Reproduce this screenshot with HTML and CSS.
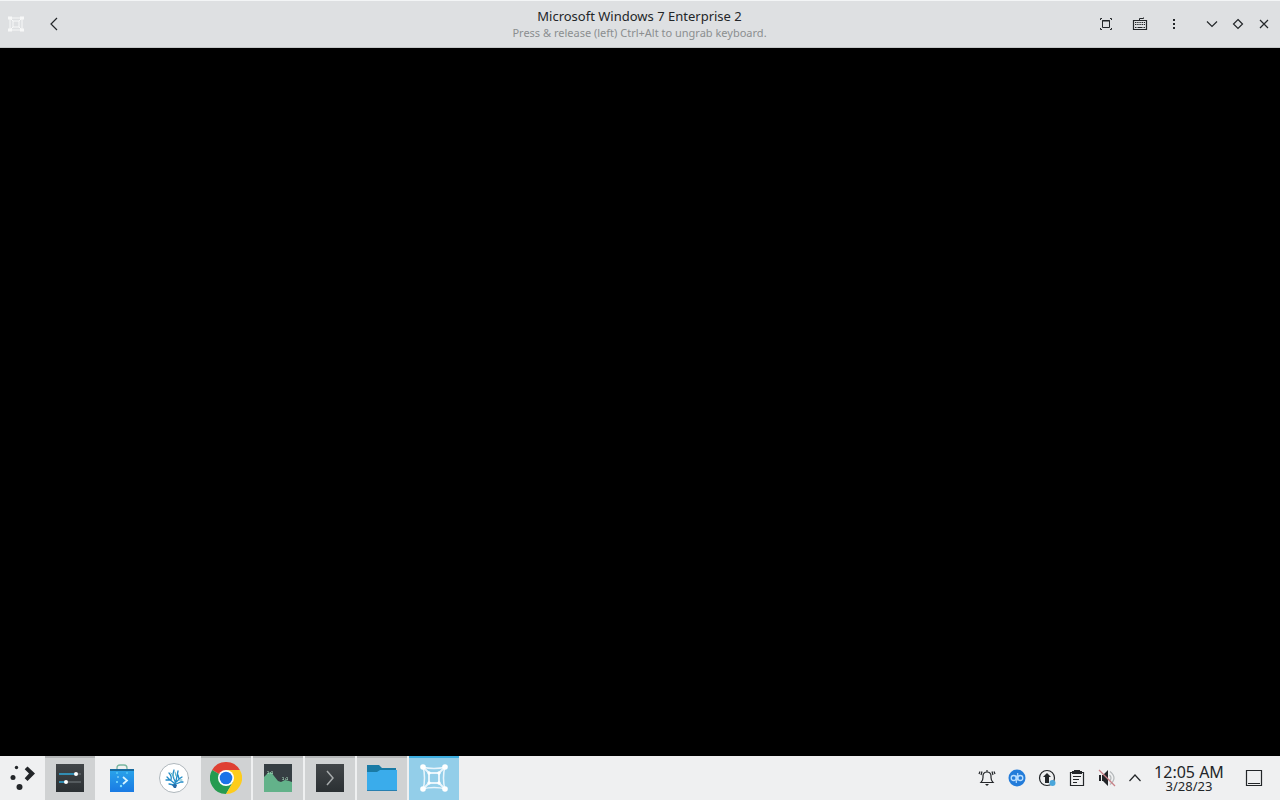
FILE: index.html
```html
<!DOCTYPE html>
<html lang="en">
<head>
  <meta charset="UTF-8" />
  <title>Microsoft Windows 7 Enterprise 2</title>
  <link rel="stylesheet" href="styles.css">
</head>
<body>
  <header class="titlebar">
    <div class="bar-left">
      <svg class="app-icon" viewBox="0 0 16 16" fill="none" stroke="#f7f8f8">
        <path d="M2 2h12v12H2zM5 5h6v6H5zM2 2l3 3M14 2l-3 3M2 14l3-3M14 14l-3-3" />
        <path d="M0 2h4M12 2h4M0 14h4M12 14h4" stroke-width="3" />
      </svg>
      <button class="bar-button" aria-label="Back">
        <svg viewBox="0 0 16 16"><path d="M11 2L5 8l6 6" /></svg>
      </button>
    </div>
    <div class="heading">
      <h1>Microsoft Windows 7 Enterprise 2</h1>
      <p>Press &amp; release (left) Ctrl+Alt to ungrab keyboard.</p>
    </div>
    <div class="bar-right">
      <button class="bar-button" aria-label="Fullscreen">
        <svg viewBox="0 0 16 16"><path d="M4.500 4.500h7v7h-7zM4 5h8M2.500 4V2.500H4M12 2.500h1.500V4M13.500 12v1.500H12M4 13.500H2.500V12" stroke-width="1" /></svg>
      </button>
      <button class="bar-button" aria-label="Send key">
        <svg viewBox="0 0 16 16"><path d="M1.500 4.500h13v9h-13z" /><path d="M7.500 4V2.500h4V1.500" stroke-width="1" /><path d="M3 6.500h10M3 8.500h10" stroke-dasharray="1.400 .8" /><path d="M3 11.500h1.500M5.500 11.500h5M11.500 11.500H13" /></svg>
      </button>
      <button class="bar-button" aria-label="Menu">
        <svg viewBox="0 0 16 16"><path d="M7 3h2v2H7zM7 7h2v2H7zM7 11h2v2H7z" fill="#232629" stroke="none" /></svg>
      </button>
      <div class="window-buttons">
        <button aria-label="Minimize"><svg viewBox="0 0 16 16"><path d="M3 5.500l5 5 5-5" /></svg></button>
        <button aria-label="Maximize"><svg viewBox="0 0 16 16"><path d="M8 3.500l4.500 4.500L8 12.500 3.500 8z" /></svg></button>
        <button aria-label="Close"><svg viewBox="0 0 16 16"><path d="M4 4l8 8M12 4l-8 8" /></svg></button>
      </div>
    </div>
  </header>

  <main class="display"></main>

  <footer class="taskbar">
    <button class="launcher" aria-label="Applications">
      <svg viewBox="0 0 28 28" fill="#232629">
        <circle cx="7.500" cy="3.500" r="1.700" /><circle cx="4" cy="13.500" r="2.500" /><circle cx="10.500" cy="23" r="3" />
        <path d="M18.500 2.500l7.500 7-7.500 7.500-2.800-2.800 4.300-4.700-4.300-4.300z" />
      </svg>
    </button>
    <nav class="tasks">
      <button class="task open" aria-label="System Settings">
        <svg viewBox="0 0 32 32">
          <path d="M2 2h28v28H2z" fill="url(#dark)" />
          <path d="M5 12h17M5 20h7" stroke="#31a8d8" stroke-width="1.600" /><path d="M12 20h15M22 12h5" stroke="#60676b" stroke-width="1.600" />
          <circle cx="22" cy="12" r="2" fill="#fff" /><circle cx="12" cy="20" r="2" fill="#fff" />
          <defs><linearGradient id="dark" x2="0" y2="1"><stop stop-color="#424649" /><stop offset="1" stop-color="#2b3033" /></linearGradient></defs>
        </svg>
      </button>
      <button class="task" aria-label="Discover">
        <svg viewBox="0 0 32 32">
          <path d="M11 7V6q0-3 3-3h4q3 0 3 3v1" fill="none" stroke="#7ab6a0" stroke-width="1.300" />
          <path d="M4 7h24v23H4z" fill="url(#bag)" /><path d="M4 7h24v2H4z" fill="#17699d" />
          <path d="M17 15l4 3.500-4 3.500" fill="none" stroke="#d6f4ff" stroke-width="1.800" />
          <circle cx="12" cy="15" r=".8" fill="#b9f2ff" /><circle cx="11" cy="20" r="1" fill="#7ddfff" /><circle cx="15" cy="24" r="1.200" fill="#7ddfff" /><circle cx="11" cy="11" r=".8" fill="#6ce5ff" /><circle cx="21" cy="11" r=".8" fill="#6ce5ff" />
          <defs><linearGradient id="bag" x2="0" y2="1"><stop stop-color="#2ba5ea" /><stop offset="1" stop-color="#197ae4" /></linearGradient></defs>
        </svg>
      </button>
      <button class="task" aria-label="Coral">
        <svg viewBox="0 0 32 32" fill="none" stroke-linecap="round">
          <circle cx="16" cy="16" r="14.500" fill="#fff" stroke="#8f9ba2" stroke-width=".7" />
          <path d="M17 25q1-5-1-8t0-9M17 22q-3-3-5-4l-3-3M12 18l-4 0M13 18q1-4-2-7M17 21q3-2 4-4l3-2M21 17l-1-4M18 19q1-5 2-10M16 23l-5-1M18 22l5-2 2 0" stroke="#218bc7" stroke-width="1.300" />
          <path d="M16 15l-3-4M18 14l-1-4M21 18l3 0" stroke="#52b1c2" />
          <path d="M14 23l3-1 2 1-1 3h-2z" fill="#276ba8" />
        </svg>
      </button>
      <button class="task open" aria-label="Google Chrome">
        <svg viewBox="0 0 32 32">
          <path d="M16 16L2.140 8A16 16 0 0 1 29.860 8z" fill="#df4032" />
          <path d="M16 16L2.140 8A16 16 0 0 0 16 32l7-12z" fill="#259b50" />
          <path d="M16 8h13.860A16 16 0 0 1 16 32l7-12z" fill="#fdcc1c" />
          <circle cx="16" cy="16" r="8" fill="#fff" /><circle cx="16" cy="16" r="6.300" fill="#1b73e8" />
        </svg>
      </button>
      <button class="task open" aria-label="System Monitor">
        <svg viewBox="0 0 32 32">
          <path d="M2 2h28v28H2z" fill="#363e43" />
          <path d="M2 15l4-4 3-1 3 4 4 5 3 1 4-2 4 1 3 1v10H2z" fill="#63b28a" />
          <path d="M6 9v4M10 9v4M6 11h5M21 15v4M25 15v4M21 17h5" stroke="#a8d8bd" stroke-dasharray="1 1" />
        </svg>
      </button>
      <button class="task open" aria-label="Terminal">
        <svg viewBox="0 0 32 32"><path d="M2 2h28v28H2z" fill="url(#dark)" /><path d="M13 9l6 7-6 7" fill="none" stroke="#a7abac" stroke-width="1.500" /></svg>
      </button>
      <button class="task open" aria-label="Files">
        <svg viewBox="0 0 32 32"><path d="M1 3h12l3 3h14v5H1z" fill="#197aa5" /><path d="M1 10h10l3-2h17v20H1z" fill="#3aaceb" /><path d="M1 28h30v1H1z" fill="#287fb0" /></svg>
      </button>
      <button class="task active" aria-label="Boxes">
        <svg viewBox="0 0 32 32" fill="none" stroke="#e8f5fc">
          <path d="M5 4q3 12 0 24M27 4q-3 12 0 24M4 5q12 3 24 0M4 27q12-3 24 0" stroke-width="1.500" />
          <path d="M11 11h10v10H11z" stroke-width="2" />
          <path d="M5 5l6 6M27 5l-6 6M5 27l6-6M27 27l-6-6" stroke-width="1.800" />
          <g fill="#fff" stroke="none"><circle cx="5" cy="5" r="2.800" /><circle cx="27" cy="5" r="2.800" /><circle cx="5" cy="27" r="2.800" /><circle cx="27" cy="27" r="2.800" /><circle cx="11" cy="11" r="1.700" /><circle cx="21" cy="11" r="1.700" /><circle cx="11" cy="21" r="1.700" /><circle cx="21" cy="21" r="1.700" /></g>
        </svg>
      </button>
    </nav>

    <div class="tray">
      <button aria-label="Notifications"><svg viewBox="0 0 20 20"><path d="M4 14.500h12q-2-2-2-5V8q0-4-4-4T6 8v1.500q0 3-2 5zM10 4V2M5 3.500L4 7M3 3.500L2 6M15 3.500l1 3.500M17 3.500l1 2.500" /><path d="M8 16h4l-2 2z" fill="#232629" stroke="none" /></svg></button>
      <button aria-label="qBittorrent"><svg viewBox="0 0 20 20"><circle cx="10" cy="10" r="8.500" fill="#237cda" stroke="none" /><g stroke="#b9deff" stroke-width="1.300"><circle cx="6.700" cy="10" r="2.500" /><circle cx="13.300" cy="10" r="2.500" /><path d="M9.300 7.500V15M10.700 5v7.500" stroke-width="1.200" /></g></svg></button>
      <button aria-label="Updates"><svg viewBox="0 0 20 20"><circle cx="10" cy="10" r="7.500" /><path d="M10 5l4 4h-2v6H8V9H6z" fill="#232629" stroke="none" /><circle cx="15.500" cy="15" r="3" fill="#4aa6db" stroke="none" /></svg></button>
      <button aria-label="Clipboard"><svg viewBox="0 0 20 20"><path d="M3.500 4.500h13v13h-13zM6 8.500h8M6 11.500h6M6 14.500h4" /><path d="M5 3h2V2h6v1h2v3H5z" fill="#232629" stroke="none" /></svg></button>
      <button aria-label="Muted"><svg viewBox="0 0 20 20"><path d="M2 7h2v6H2zM5 7h1l5-5v16l-5-5H5z" fill="#232629" stroke="none" /><path d="M12.500 7q3 3 0 6M13 3.500q8 6.500 0 13" stroke="#b4b7b9" /><path d="M2 2l16 16" stroke="#c98087" /></svg></button>
      <button class="expand" aria-label="Show hidden icons"><svg viewBox="0 0 20 20"><path d="M4.500 13L10 7l5.500 6" /></svg></button>
      <button class="clock"><time>12:05 AM</time><span>3/28/23</span></button>
      <button class="show-desktop" aria-label="Show desktop"><svg viewBox="0 0 20 20"><path d="M2.500 2.500h15v15h-15zM4 15.500h12" /></svg></button>
    </div>
  </footer>
</body>
</html>
```
FILE: styles.css
```css
* {
  box-sizing: border-box;
}

body {
  margin: 0;
  min-height: 100vh;
  display: flex;
  flex-direction: column;
  background: #000;
  color: #232629;
  font-family: 'Noto Sans', sans-serif;
}

button {
  display: flex;
  align-items: center;
  justify-content: center;
  padding: 0;
  border: none;
  background: none;
  color: inherit;
  font-family: inherit;
  cursor: pointer;
}

svg {
  display: block;
  flex: none;
}

.titlebar {
  display: grid;
  grid-template-columns: 1fr auto 1fr;
  align-items: center;
  height: 48px;
  padding: 0 3px 0 8px;
  background: #dee0e2;
  border-top: 1px solid #f3f5f6;
  border-bottom: 1px solid #c5c8c9;
}

.bar-left, .bar-right, .window-buttons {
  display: flex;
  align-items: center;
}

.bar-left {
  gap: 13px;
}

.bar-right {
  justify-content: flex-end;
}

.titlebar svg {
  width: 16px;
  height: 16px;
}

.titlebar button svg {
  fill: none;
  stroke: #232629;
  stroke-width: 1.2;
}

.bar-button {
  width: 34px;
  height: 34px;
}

.window-buttons {
  margin-left: 8px;
}

.window-buttons button {
  width: 26px;
  height: 26px;
}

.heading {
  text-align: center;
  padding: 0 6px 2px 0;
}

.heading h1 {
  margin: 0;
  font-size: 13px;
  font-weight: 400;
  line-height: 18px;
}

.heading p {
  margin: 0;
  font-size: 11px;
  line-height: 15px;
  color: #8b8e90;
}

.display {
  flex: 1;
  background: #000;
}

.taskbar {
  display: flex;
  height: 44px;
  padding-right: 2px;
  background: #eff0f1;
}

.launcher {
  width: 45px;
}

.launcher svg {
  width: 28px;
  height: 28px;
}

.tasks {
  display: flex;
  gap: 2px;
}

.task {
  width: 50px;
  border-top: 2px solid transparent;
  padding-bottom: 2px;
}

.task svg {
  width: 32px;
  height: 32px;
}

.task.open {
  background: #d0d2d3;
  border-top-color: #b4b6b7;
}

.task.active {
  background: #93cee9;
  border-top-color: #3daee0;
}

.tray {
  display: flex;
  margin-left: auto;
}

.tray button {
  width: 30px;
}

.tray svg {
  width: 20px;
  height: 20px;
  fill: none;
  stroke: #232629;
  stroke-width: 1.2;
}

.tray .expand {
  width: 26px;
}

.tray .clock {
  flex-direction: column;
  width: 82px;
}

.clock time {
  font-size: 16px;
  line-height: 16px;
}

.clock span {
  font-size: 13px;
  line-height: 12px;
}

.tray .show-desktop {
  width: 48px;
}
```
